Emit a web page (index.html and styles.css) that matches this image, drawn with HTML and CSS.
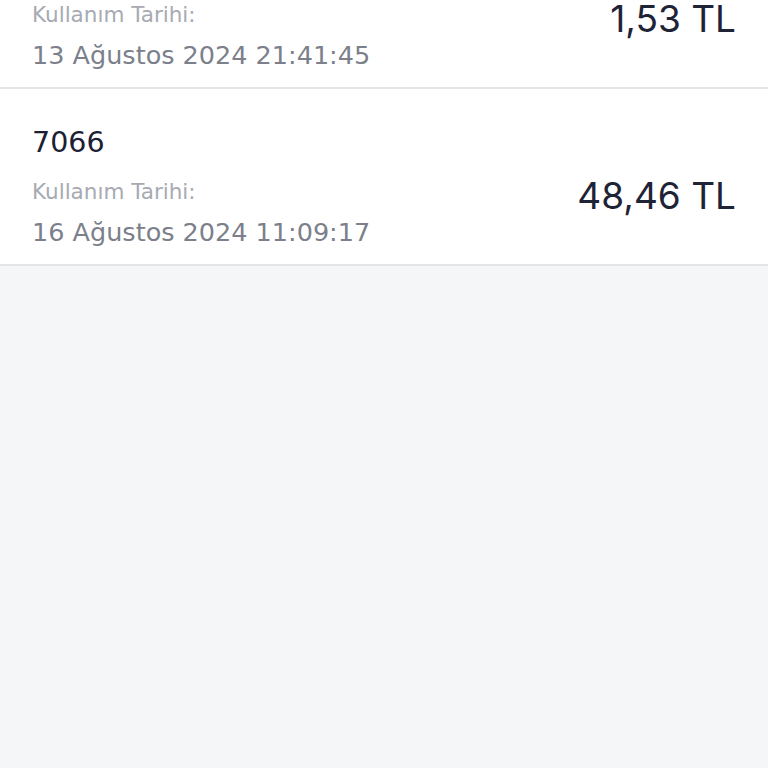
FILE: index.html
```html
<!DOCTYPE html>
<html lang="tr">
<head>
  <meta charset="UTF-8">
  <meta name="viewport" content="width=device-width, initial-scale=1.0">
  <title>Kullanımlar</title>
  <link rel="stylesheet" href="styles.css">
</head>
<body>
  <main class="usage-list">
    <div class="usage-item">
      <p class="usage-code">7065</p>
      <div class="usage-row">
        <div class="usage-info">
          <span class="usage-label">Kullanım Tarihi:</span>
          <span class="usage-date">13 Ağustos 2024 21:41:45</span>
        </div>
        <span class="usage-amount">1,53 TL</span>
      </div>
    </div>

    <div class="usage-item">
      <p class="usage-code">7066</p>
      <div class="usage-row">
        <div class="usage-info">
          <span class="usage-label">Kullanım Tarihi:</span>
          <span class="usage-date">16 Ağustos 2024 11:09:17</span>
        </div>
        <span class="usage-amount">48,46 TL</span>
      </div>
    </div>
  </main>
</body>
</html>
```

FILE: styles.css
```css
* {
  margin: 0;
  padding: 0;
  box-sizing: border-box;
}

html, body {
  min-height: 100vh;
}

body {
  background: #f5f6f8;
  font-family: 'DejaVu Sans', 'Noto Sans', sans-serif;
  color: #1f2336;
  overflow: hidden;
}

/* list is scrolled down a bit, first item partly hidden */
.usage-list {
  margin-top: -88px;
}

.usage-item {
  background: #ffffff;
  border-bottom: 2px solid #e3e5e8;
  padding: 36px 32px 14px;
}

.usage-code {
  font-size: 28.5px;
  line-height: 36px;
  color: #1c2033;
}

.usage-row {
  display: flex;
  align-items: flex-start;
  justify-content: space-between;
  margin-top: 16px;
}

.usage-info {
  display: flex;
  flex-direction: column;
  gap: 7px;
}

.usage-label {
  font-size: 21.5px;
  line-height: 30px;
  color: #a7aab2;
}

.usage-date {
  font-size: 25.5px;
  line-height: 36px;
  color: #7c808b;
}

.usage-amount {
  font-family: 'Inter', 'Roboto', sans-serif;
  font-size: 37px;
  line-height: 38px;
  color: #1f2336;
}
```
